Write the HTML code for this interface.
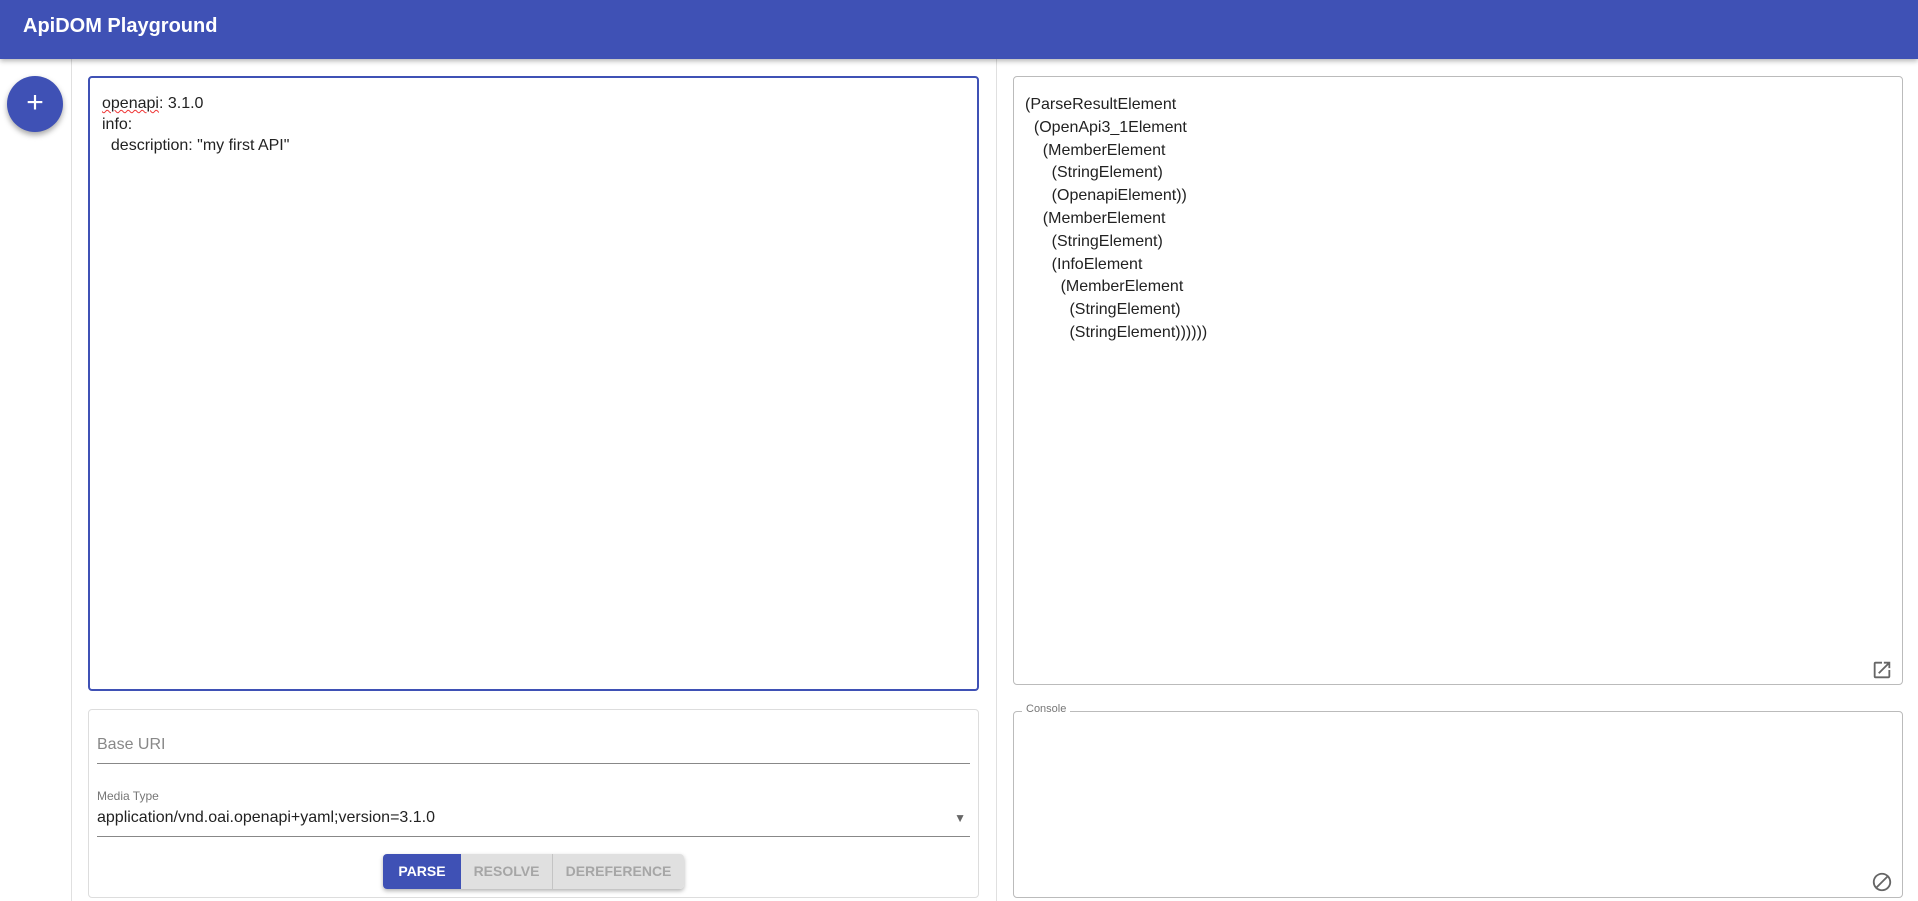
<!DOCTYPE html>
<html><head><meta charset="utf-8"><style>
*{box-sizing:border-box;margin:0;padding:0}
body{width:1918px;height:901px;overflow:hidden;background:#fff;font-family:"Liberation Sans",sans-serif;position:relative;color:#222}
.hdr{position:absolute;left:0;top:0;width:1918px;height:59px;background:#3f51b5;box-shadow:0 2px 5px rgba(0,0,0,.3);z-index:2}
.hdr span{position:absolute;left:23px;top:15px;color:#fff;font-size:20px;font-weight:bold}
.fab{position:absolute;left:7px;top:76px;width:56px;height:56px;border-radius:50%;background:#3f51b5;box-shadow:0 3px 6px rgba(0,0,0,.35);color:#fff;font-size:30px;text-align:center;line-height:54px}
.vl{position:absolute;top:59px;bottom:0;width:1px;background:#e0e0e0}
.ed{position:absolute;left:88px;top:76px;width:891px;height:615px;border:2px solid #3f51b5;border-radius:4px;padding:16px 0 0 12px;font-size:16px;line-height:20.8px;white-space:pre}
.card{position:absolute;border:1px solid #ddd;border-radius:4px}
.ttl{position:absolute;border:1px solid #bbb;border-radius:4px}
.ast{left:1013px;top:76px;width:890px;height:609px;padding:17px 0 0 11px;font-size:16px;line-height:22.8px;white-space:pre}
.in{position:absolute;left:97px;width:873px;border-bottom:1px solid #888}
.btn{position:absolute;top:854px;height:35px;font-size:14px;font-weight:bold;text-align:center;line-height:35px;background:#e0e0e0;color:#a6a6a6}
</style></head><body>
<div class="hdr"><span>ApiDOM Playground</span></div>
<div class="fab">+</div>
<div class="vl" style="left:71px"></div>
<div class="vl" style="left:996px"></div>
<div class="ed"><span style="text-decoration:underline wavy #e33;text-decoration-thickness:1px">openapi</span>: 3.1.0
info:
  description: "my first API"</div>
<div class="card" style="left:88px;top:709px;width:891px;height:189px"></div>
<div class="in" style="top:736px;height:28px;color:#888;font-size:16px">Base URI</div>
<div style="position:absolute;left:97px;top:789px;font-size:12px;color:#777">Media Type</div>
<div class="in" style="top:809px;height:28px;font-size:16px">application/vnd.oai.openapi+yaml;version=3.1.0<span style="position:absolute;right:4px;top:2px;font-size:12px;color:#666">▼</span></div>
<div style="position:absolute;left:383px;top:854px;width:301px;height:35px;box-shadow:0 2px 4px rgba(0,0,0,.3);border-radius:4px"></div>
<div class="btn" style="left:383px;width:78px;background:#3f51b5;color:#fff;border-radius:4px 0 0 4px">PARSE</div>
<div class="btn" style="left:461px;width:92px;border-right:1px solid #c4c4c4">RESOLVE</div>
<div class="btn" style="left:553px;width:131px;border-radius:0 4px 4px 0">DEREFERENCE</div>
<div class="ttl ast">(ParseResultElement
  (OpenApi3_1Element
    (MemberElement
      (StringElement)
      (OpenapiElement))
    (MemberElement
      (StringElement)
      (InfoElement
        (MemberElement
          (StringElement)
          (StringElement))))))</div>
<svg style="position:absolute;left:1871px;top:659px" width="22" height="22" viewBox="0 0 24 24"><path fill="#666" d="M19 19H5V5h7V3H5a2 2 0 0 0-2 2v14a2 2 0 0 0 2 2h14c1.1 0 2-.9 2-2v-7h-2v7zM14 3v2h3.590l-9.830 9.830 1.410 1.410L19 6.410V10h2V3h-7z"/></svg>
<div class="ttl" style="left:1013px;top:711px;width:890px;height:187px"></div>
<div style="position:absolute;left:1022px;top:703px;background:#fff;padding:0 4px;font-size:11px;color:#777">Console</div>
<svg style="position:absolute;left:1871px;top:871px" width="22" height="22" viewBox="0 0 24 24"><path fill="#666" d="M12 2C6.48 2 2 6.48 2 12s4.48 10 10 10 10-4.48 10-10S17.52 2 12 2zM4 12c0-4.42 3.58-8 8-8 1.850 0 3.550.630 4.900 1.690L5.690 16.900A7.902 7.902 0 0 1 4 12zm8 8c-1.850 0-3.550-.630-4.900-1.690L18.310 7.100A7.902 7.902 0 0 1 20 12c0 4.420-3.580 8-8 8z"/></svg>
</body></html>
